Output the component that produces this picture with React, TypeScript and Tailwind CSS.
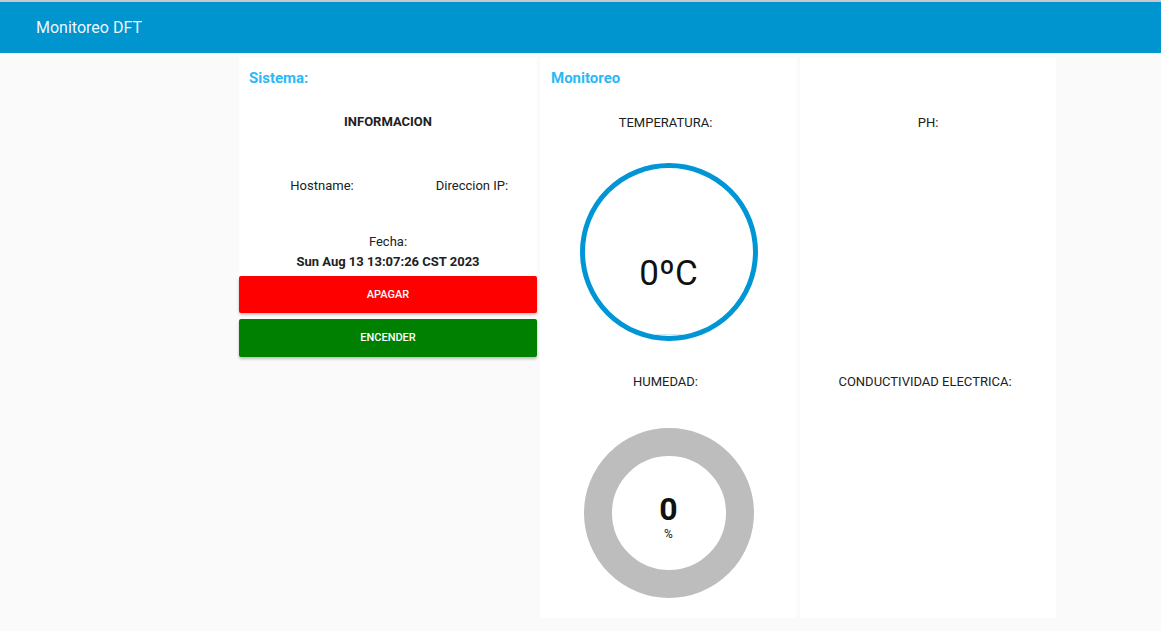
import React from 'react'

export default function App() {
  const fecha = 'Sun Aug 13 13:07:26 CST 2023'
  const temperatura = 0
  const humedad = 0

  return (
    <div className="min-h-[631px] bg-[#fafafa] font-['Roboto',sans-serif] text-[#212121]">
      <header className="h-[53px] border-t-2 border-[#c9c9c9] bg-[#0095cf] flex items-center px-9">
        <h1 className="text-[16px] text-white/95 font-normal">Monitoreo DFT</h1>
      </header>

      <main className="flex items-start pl-[239px] pt-[5px] gap-[3px]">
        {/* Sistema */}
        <section className="w-[298px] bg-white flex flex-col">
          <h2 className="pl-[10px] pt-[9px] text-[15px] font-bold text-[#2cb8f6]">Sistema:</h2>
          <p className="mt-[22px] text-center text-[13px] font-bold">INFORMACION</p>
          <div className="mt-[45px] flex pl-[18px] gap-[20px] text-[13px]">
            <span className="w-[130px] shrink-0 text-center">Hostname:</span>
            <span className="w-[130px] shrink-0 text-center">Direccion IP:</span>
          </div>
          <p className="mt-[36px] text-center text-[13px]">Fecha:</p>
          <p className="mt-[1px] text-center text-[13px] font-bold">{fecha}</p>
          <button className="mt-[4px] h-[37px] shrink-0 w-full rounded-[2px] bg-[#ff0000] text-white text-[11px] font-medium pt-[2px] shadow-[0_2px_3px_rgba(0,0,0,0.25)]">
            APAGAR
          </button>
          <button className="mt-[6px] h-[38px] shrink-0 w-full rounded-[2px] bg-[#008000] text-white text-[11px] font-medium pt-[2px] shadow-[0_2px_3px_rgba(0,0,0,0.25)]">
            ENCENDER
          </button>
        </section>

        {/* Monitoreo */}
        <section className="w-[257px] h-[560px] bg-white flex flex-col">
          <h2 className="pl-[11px] pt-[9px] text-[15px] font-bold text-[#2cb8f6]">Monitoreo</h2>
          <p className="mt-[23px] text-center text-[13px] pr-[6px]">TEMPERATURA:</p>
          <div className="mt-[31px] flex justify-center">
            <div className="relative w-[178px] h-[178px] rounded-full border-[5px] border-[#0096d6] flex items-center justify-center">
              <span className="mt-[42px] text-[35px] leading-none text-[#111]">{temperatura}ºC</span>
              <span className="absolute bottom-[1px] left-1/2 -translate-x-1/2 w-[28px] h-[1px] bg-[#cfe9f6] rounded-full" />
            </div>
          </div>
          <p className="mt-[31px] text-center text-[13px] pr-[6px]">HUMEDAD:</p>
          <div className="mt-[36px] flex justify-center">
            <div className="w-[170px] h-[170px] rounded-full border-[28px] border-[#bdbdbd] flex flex-col items-center justify-center">
              <span className="text-[32px] font-bold leading-none text-[#111] mt-[8px]">{humedad}</span>
              <span className="text-[12px] leading-none mt-[3px]">%</span>
            </div>
          </div>
        </section>

        {/* Sensores */}
        <section className="w-[256px] h-[560px] bg-white flex flex-col">
          <p className="mt-[55px] text-center text-[13px]">PH:</p>
          <p className="mt-[239px] text-center text-[13px] pr-[6px]">CONDUCTIVIDAD ELECTRICA:</p>
        </section>
      </main>
    </div>
  )
}
